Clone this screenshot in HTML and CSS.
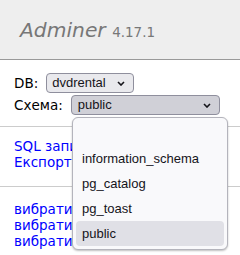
FILE: index.html
```html
<!DOCTYPE html>
<html lang="uk">
<head>
<meta charset="utf-8">
<title>Adminer</title>
<link rel="stylesheet" href="styles.css">
</head>
<body>
<div class="menu">
  <h1 class="logo"><a class="brand" href="#">Adminer</a> <span class="version">4.17.1</span></h1>
  <form class="dbs">
    <div class="row">
      <span class="label">DB:</span>
      <span class="select select-db">dvdrental<svg class="chev" width="8" height="5" viewBox="0 0 8 5"><polyline points="1,1 4,4 7,1"/></svg></span>
    </div>
    <div class="row">
      <span class="label">Схема:</span>
      <span class="select select-ns">public<svg class="chev" width="8" height="5" viewBox="0 0 8 5"><polyline points="1,1 4,4 7,1"/></svg></span>
    </div>
  </form>
  <p class="links">
    <a href="#">SQL запит</a> <a href="#">Імпорт</a><br>
    <a href="#">Експорт</a> <a href="#">Створити таблицю</a>
  </p>
  <ul class="tables">
    <li><a href="#">вибрати</a> <a href="#">actor</a></li>
    <li><a href="#">вибрати</a> <a href="#">address</a></li>
    <li><a href="#">вибрати</a> <a href="#">category</a></li>
  </ul>
  <ul class="popup">
    <li class="opt"></li>
    <li class="opt">information_schema</li>
    <li class="opt">pg_catalog</li>
    <li class="opt">pg_toast</li>
    <li class="opt is-active">public</li>
  </ul>
</div>
</body>
</html>
```

FILE: styles.css
```css
html, body {
  margin: 0;
  padding: 0;
  background: #fff;
  overflow: hidden;
}
body {
  font-family: "DejaVu Sans", Verdana, sans-serif;
  font-size: 13.5px;
  line-height: 16px;
  color: #000;
}
a {
  color: #00f;
  text-decoration: none;
}
.menu {
  position: relative;
  width: 240px;
}
.logo {
  margin: 0;
  height: 60px;
  box-sizing: border-box;
  padding: 18px 20px 0;
  font-size: 20.25px;
  line-height: 25px;
  font-weight: normal;
  color: #777;
  background: #eee;
  border-bottom: 1px solid #999;
  white-space: nowrap;
}
.brand {
  color: #777;
  font-style: italic;
}
.version {
  font-size: 13.5px;
  color: #777;
}
.dbs {
  margin: 0;
  padding: 13px 14px 11px;
  border-bottom: 1px solid #ccc;
  display: flex;
  flex-direction: column;
  gap: 2px;
}
.row {
  display: flex;
  align-items: center;
  gap: 8px;
  height: 20px;
}
.label {
  color: #000;
}
.select {
  box-sizing: border-box;
  height: 20px;
  display: flex;
  align-items: center;
  justify-content: space-between;
  border: 1px solid #8f8f9d;
  border-radius: 4px;
  background: #e9e9ed;
  color: #15141a;
  font-family: "Liberation Sans", Arial, sans-serif;
  font-size: 13px;
  padding: 0 8px 0 5px;
}
.select-db {
  width: 88px;
}
.select-ns {
  width: 149px;
  background: #d0d0d7;
  padding-left: 6px;
}
.chev {
  fill: none;
  stroke: #15141a;
  stroke-width: 1.6;
}
.links {
  margin: 0;
  padding: 11px 14px 16px;
  border-bottom: 1px solid #ccc;
  white-space: nowrap;
}
.links a {
  margin-right: 16px;
}
.tables {
  list-style: none;
  margin: 0;
  padding: 14px 14px 10px;
  white-space: nowrap;
}
.popup {
  position: absolute;
  top: 117px;
  left: 72px;
  width: 156px;
  box-sizing: border-box;
  margin: 0;
  padding: 3px;
  list-style: none;
  background: #f9f9fb;
  border: 1px solid #b4b4bc;
  border-radius: 6px;
  box-shadow: 0 1px 2px rgba(0, 0, 0, 0.25);
  font-family: "Liberation Sans", Arial, sans-serif;
  font-size: 13px;
  color: #15141a;
}
.opt {
  height: 25px;
  line-height: 25px;
  padding: 0 6px;
  border-radius: 4px;
}
.opt.is-active {
  background: #e0e0e6;
}
```
